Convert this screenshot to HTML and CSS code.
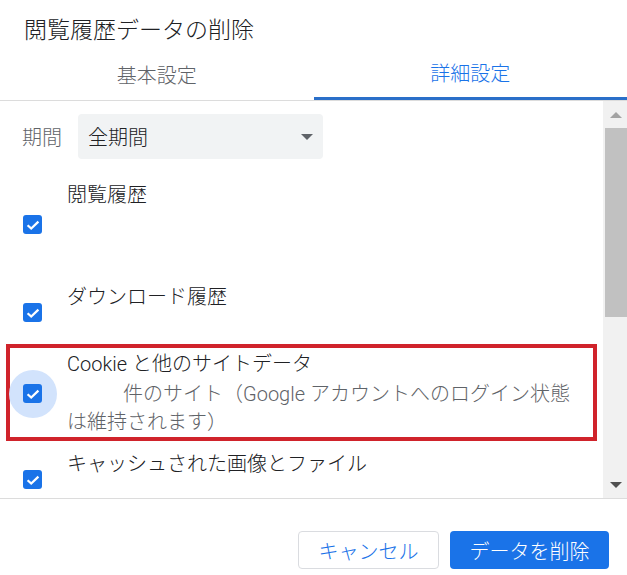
FILE: index.html
```html
<!DOCTYPE html>
<html lang="ja">
<head>
<meta charset="utf-8">
<title>閲覧履歴データの削除</title>
<link rel="stylesheet" href="styles.css">
</head>
<body>
<div class="dialog">
  <div class="title">閲覧履歴データの削除</div>
  <div class="tabs">
    <div class="tab">基本設定</div>
    <div class="tab active">詳細設定</div>
  </div>
  <div class="main">
    <div class="content">
      <div class="period">
        <span class="period-label">期間</span>
        <div class="select">
          <span>全期間</span>
          <span class="caret"></span>
        </div>
      </div>

      <div class="item item-first">
        <div class="check-col"><span class="checkbox"><svg viewBox="0 0 18 18" width="18" height="18"><path d="M3.6 9.2 L7.2 12.6 L14.4 5.6" fill="none" stroke="#fff" stroke-width="2.2"/></svg></span></div>
        <div class="text">
          <div class="label">閲覧履歴</div>
          <div class="sub">&nbsp;</div>
          <div class="sub">&nbsp;</div>
        </div>
      </div>

      <div class="item">
        <div class="check-col"><span class="checkbox"><svg viewBox="0 0 18 18" width="18" height="18"><path d="M3.6 9.2 L7.2 12.6 L14.4 5.6" fill="none" stroke="#fff" stroke-width="2.2"/></svg></span></div>
        <div class="text">
          <div class="label">ダウンロード履歴</div>
          <div class="sub">&nbsp;</div>
        </div>
      </div>

      <div class="item item-marked">
        <div class="check-col"><span class="focus-ring"></span><span class="checkbox"><svg viewBox="0 0 18 18" width="18" height="18"><path d="M3.6 9.2 L7.2 12.6 L14.4 5.6" fill="none" stroke="#fff" stroke-width="2.2"/></svg></span></div>
        <div class="text">
          <div class="label">Cookie と他のサイトデータ</div>
          <div class="sub"><span class="blank"></span>件のサイト（Google アカウントへのログイン状態</div>
          <div class="sub">は維持されます）</div>
        </div>
      </div>

      <div class="item">
        <div class="check-col"><span class="checkbox"><svg viewBox="0 0 18 18" width="18" height="18"><path d="M3.6 9.2 L7.2 12.6 L14.4 5.6" fill="none" stroke="#fff" stroke-width="2.2"/></svg></span></div>
        <div class="text">
          <div class="label">キャッシュされた画像とファイル</div>
          <div class="sub">&nbsp;</div>
        </div>
      </div>
    </div>
    <div class="scrollbar">
      <div class="arrow-up"></div>
      <div class="thumb"></div>
      <div class="track-rest"></div>
      <div class="arrow-down"></div>
    </div>
  </div>
  <div class="footer">
    <button class="btn cancel">キャンセル</button>
    <button class="btn primary">データを削除</button>
  </div>
</div>
</body>
</html>
```

FILE: styles.css
```css
html, body {
  margin: 0;
  padding: 0;
  background: #fff;
}

body {
  font-family: Roboto, "Noto Sans CJK JP", sans-serif;
  font-weight: 300;
  color: #202124;
}

.dialog {
  width: 627px;
  height: 575px;
  display: flex;
  flex-direction: column;
  overflow: hidden;
}

.title {
  height: 50px;
  box-sizing: border-box;
  padding: 15px 0 0 24px;
  font-size: 23px;
  line-height: 32px;
  color: #202124;
}

.tabs {
  display: grid;
  grid-template-columns: 1fr 1fr;
  height: 51px;
  box-sizing: border-box;
  border-bottom: 1px solid #dcdcdc;
}

.tab {
  display: flex;
  align-items: center;
  justify-content: center;
  font-size: 20px;
  color: #5f6368;
  box-sizing: border-box;
  padding-bottom: 2px;
}

.tab.active {
  color: #1a73e8;
  border-bottom: 3px solid #2a6fc9;
}

.main {
  height: 397px;
  display: flex;
}

.content {
  flex: 1;
  overflow: hidden;
}

.period {
  display: flex;
  align-items: center;
  margin-top: 13px;
  height: 45px;
}

.period-label {
  width: 78px;
  flex: none;
  box-sizing: border-box;
  padding-left: 22px;
  font-size: 20px;
  color: #5f6368;
  white-space: nowrap;
}

.select {
  width: 245px;
  height: 45px;
  box-sizing: border-box;
  background: #f1f3f4;
  border-radius: 4px;
  display: flex;
  align-items: center;
  justify-content: space-between;
  padding: 0 10px 0 10px;
  font-size: 20px;
  color: #202124;
}

.caret {
  width: 0;
  height: 0;
  border-left: 6px solid transparent;
  border-right: 6px solid transparent;
  border-top: 6px solid #5f6368;
}

.item {
  display: flex;
  align-items: center;
  padding: 7px 0;
}

.item-first {
  margin-top: 13px;
}

.item-marked {
  margin: -4px 6px 0 6px;
  padding: 0 0 1px 0;
  border: 4px solid #d0232b;
}

.check-col {
  position: relative;
  width: 67px;
  flex: none;
  display: flex;
  align-items: center;
  padding-left: 23px;
  box-sizing: border-box;
  height: 20px;
  margin-top: 3px;
}

.item-marked .check-col {
  width: 57px;
  padding-left: 13px;
}

.checkbox {
  position: relative;
  width: 19px;
  height: 19px;
  border-radius: 3px;
  background: #1a73e8;
  display: flex;
  align-items: center;
  justify-content: center;
}

.focus-ring {
  position: absolute;
  left: -1px;
  top: -14px;
  width: 48px;
  height: 48px;
  border-radius: 50%;
  background: #d2e3fc;
}

.text {
  flex: 1;
}

.label {
  font-size: 20px;
  line-height: 32px;
  color: #202124;
}

.sub {
  font-size: 20px;
  line-height: 28px;
  color: #5f6368;
  white-space: nowrap;
}

.blank {
  display: inline-block;
  width: 56px;
}

.scrollbar {
  width: 24px;
  flex: none;
  background: #f1f1f1;
  display: flex;
  flex-direction: column;
  align-items: flex-end;
}

.arrow-up,
.arrow-down {
  width: 22px;
  height: 27px;
  display: flex;
  align-items: center;
  justify-content: center;
}

.arrow-up::before {
  content: "";
  border-left: 6px solid transparent;
  border-right: 6px solid transparent;
  border-bottom: 6px solid #a3a3a3;
}

.arrow-down::before {
  content: "";
  border-left: 6px solid transparent;
  border-right: 6px solid transparent;
  border-top: 6px solid #505050;
}

.thumb {
  width: 22px;
  height: 189px;
  background: #c1c1c1;
}

.track-rest {
  flex: 1;
}

.footer {
  flex: 1;
  border-top: 1px solid #dcdcdc;
  display: flex;
  justify-content: flex-end;
  align-items: flex-start;
  gap: 11px;
  padding: 32px 18px 0 0;
}

.btn {
  font-family: Roboto, "Noto Sans CJK JP", sans-serif;
  font-weight: 300;
  font-size: 20px;
  height: 38px;
  border-radius: 4px;
  box-sizing: border-box;
  padding: 0;
  cursor: pointer;
}

.cancel {
  width: 141px;
  background: #fff;
  color: #1a73e8;
  border: 1px solid #dadce0;
}

.primary {
  width: 159px;
  background: #1a73e8;
  color: #fff;
  border: none;
}
```
